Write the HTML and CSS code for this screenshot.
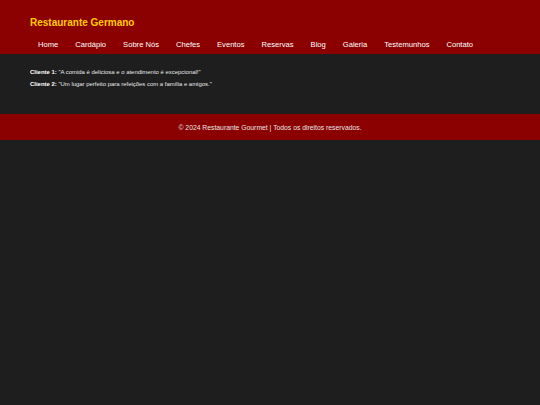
FILE: index.html
```html
<!DOCTYPE html>
<html lang="pt">
<head>
<meta charset="utf-8">
<title>Restaurante Germano</title>
<link rel="stylesheet" href="styles.css">
</head>
<body>
<header class="header">
  <h1 class="title">Restaurante Germano</h1>
  <nav class="nav">
    <a href="#">Home</a>
    <a href="#">Cardápio</a>
    <a href="#">Sobre Nós</a>
    <a href="#">Chefes</a>
    <a href="#">Eventos</a>
    <a href="#">Reservas</a>
    <a href="#">Blog</a>
    <a href="#">Galeria</a>
    <a href="#">Testemunhos</a>
    <a href="#">Contato</a>
  </nav>
</header>
<main class="content">
  <p><strong class="name">Cliente 1:</strong> "A comida é deliciosa e o atendimento é excepcional!"</p>
  <p><strong class="name">Cliente 2:</strong> "Um lugar perfeito para refeições com a família e amigos."</p>
</main>
<footer class="footer">
  <p>© 2024 Restaurante Gourmet | Todos os direitos reservados.</p>
</footer>
</body>
</html>
```
FILE: styles.css
```css
html, body {
  margin: 0;
  padding: 0;
  background: #1e1e1e;
  font-family: "Liberation Sans", Arial, sans-serif;
}
.header {
  background: #8b0000;
  padding: 16px 30px 5px;
  height: 33px;
}
.title {
  margin: 0;
  color: #ffcc00;
  font-size: 10px;
  font-weight: bold;
  line-height: 13px;
}
.nav {
  display: flex;
  gap: 17px;
  padding-left: 8px;
  margin-top: 11px;
}
.nav a {
  color: #ffffff;
  text-decoration: none;
  font-size: 7.6px;
  line-height: 9px;
}
.content {
  padding: 15px 30px 19px;
  height: 26px;
  color: #e8e8e8;
  font-size: 5.95px;
}
.content p {
  margin: 0 0 6px;
  line-height: 6px;
}
.name {
  color: #ffffff;
}
.footer {
  background: #8b0000;
  height: 26px;
  display: flex;
  align-items: center;
  justify-content: center;
}
.footer p {
  margin: 0;
  color: #e6e6e6;
  font-size: 6.8px;
}
```
